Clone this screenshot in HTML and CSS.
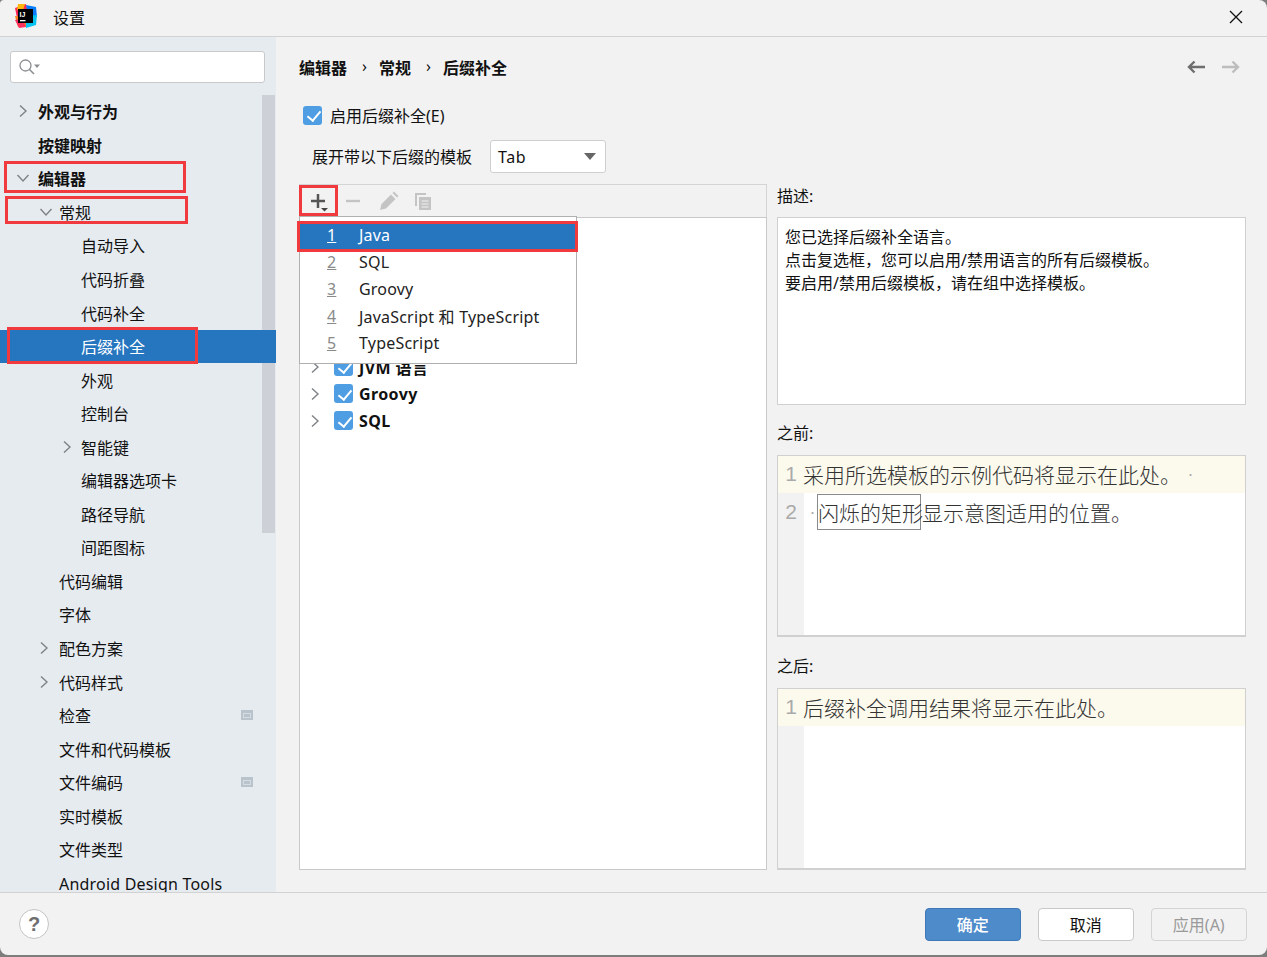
FILE: index.html
```html
<!DOCTYPE html>
<html lang="zh-CN">
<head>
<meta charset="UTF-8" />
<title>设置</title>
<link rel="stylesheet" href="styles.css">
</head>
<body>
<div class="window">

  <div class="titlebar">
    <svg class="logo" width="24" height="24" viewBox="0 0 24 24">
      <polygon points="1,4 12,0 14,8 3,14" fill="#fe2857"/>
      <polygon points="4,0 11,0 9,6 3,6" fill="#fdb60d"/>
      <polygon points="12,1 22,3 23,13 14,12" fill="#087cfa"/>
      <polygon points="1,12 10,12 14,23 4,23" fill="#fc801d"/>
      <polygon points="1,16 8,14 12,23 5,24" fill="#fe315d"/>
      <polygon points="12,12 23,11 22,21 12,24" fill="#07c3f2"/>
      <rect x="4" y="5" width="15" height="14" fill="#000"/>
      <rect x="6" y="16" width="5.500" height="1.300" fill="#fff"/>
      <text x="5.500" y="12.500" font-family="Liberation Sans" font-weight="700" font-size="7" fill="#fff">IJ</text>
    </svg>
    <span class="title">设置</span>
    <svg class="close" width="14" height="14" viewBox="0 0 14 14"><path d="M1 1L13 13M13 1L1 13" stroke="#111" stroke-width="1.300" fill="none"/></svg>
  </div>

  <div class="content">
    <aside class="sidebar">
      <div class="search">
        <svg width="24" height="18" viewBox="0 0 24 18">
          <circle cx="7.500" cy="7.500" r="5.500" fill="none" stroke="#8c8f92" stroke-width="1.300"/>
          <path d="M11.500 11.500L16 16" stroke="#8c8f92" stroke-width="1.600"/>
          <path d="M16 6.500h6l-3 3.500z" fill="#8c8f92"/>
        </svg>
      </div>
      <div class="tree">
        <div class="row lv0 strong"><svg class="chev" width="10" height="14" viewBox="0 0 10 14"><path d="M2 1.500L8 7L2 12.500" fill="none" stroke="#7f8387" stroke-width="1.400"/></svg>外观与行为</div>
        <div class="row lv0 strong">按键映射</div>
        <div class="row lv0 strong"><svg class="chev down" width="14" height="10" viewBox="0 0 14 10"><path d="M1.500 2L7 8L12.500 2" fill="none" stroke="#7f8387" stroke-width="1.400"/></svg>编辑器</div>
        <div class="row lv1"><svg class="chev" width="14" height="10" viewBox="0 0 14 10"><path d="M1.500 2L7 8L12.500 2" fill="none" stroke="#7f8387" stroke-width="1.400"/></svg>常规</div>
        <div class="row lv2">自动导入</div>
        <div class="row lv2">代码折叠</div>
        <div class="row lv2">代码补全</div>
        <div class="row lv2 selected">后缀补全</div>
        <div class="row lv2">外观</div>
        <div class="row lv2">控制台</div>
        <div class="row lv2"><svg class="chev" width="10" height="14" viewBox="0 0 10 14"><path d="M2 1.500L8 7L2 12.500" fill="none" stroke="#7f8387" stroke-width="1.400"/></svg>智能键</div>
        <div class="row lv2">编辑器选项卡</div>
        <div class="row lv2">路径导航</div>
        <div class="row lv2">间距图标</div>
        <div class="row lv1">代码编辑</div>
        <div class="row lv1">字体</div>
        <div class="row lv1"><svg class="chev" width="10" height="14" viewBox="0 0 10 14"><path d="M2 1.500L8 7L2 12.500" fill="none" stroke="#7f8387" stroke-width="1.400"/></svg>配色方案</div>
        <div class="row lv1"><svg class="chev" width="10" height="14" viewBox="0 0 10 14"><path d="M2 1.500L8 7L2 12.500" fill="none" stroke="#7f8387" stroke-width="1.400"/></svg>代码样式</div>
        <div class="row lv1">检查<span class="badge"></span></div>
        <div class="row lv1">文件和代码模板</div>
        <div class="row lv1">文件编码<span class="badge"></span></div>
        <div class="row lv1">实时模板</div>
        <div class="row lv1">文件类型</div>
        <div class="row lv1 latin">Android Design Tools</div>
      </div>
      <div class="scrollbar"></div>
    </aside>

    <main class="panel">
      <div class="crumbs">
        <span>编辑器</span><i>›</i><span>常规</span><i>›</i><span>后缀补全</span>
        <div class="nav">
          <svg width="20" height="14" viewBox="0 0 20 14"><path d="M19 7H3M8.500 1.500L3 7L8.500 12.500" fill="none" stroke="#6e6e6e" stroke-width="2.400"/></svg>
          <svg width="20" height="14" viewBox="0 0 20 14"><path d="M1 7H17M11.500 1.500L17 7L11.500 12.500" fill="none" stroke="#bdbdbd" stroke-width="2.400"/></svg>
        </div>
      </div>

      <label class="enable"><span class="check"></span>启用后缀补全(E)</label>

      <div class="expand">
        <span class="expand-label">展开带以下后缀的模板</span>
        <div class="select">Tab<b></b></div>
      </div>

      <div class="columns">
        <section class="left">
          <div class="toolbar">
            <svg class="tb-add" width="20" height="22" viewBox="0 0 20 22"><path d="M2 9h14M9 2v14" stroke="#555" stroke-width="2.500" fill="none"/><path d="M12 16h7l-3.500 3.500z" fill="#444"/></svg>
            <svg class="tb-remove" width="16" height="16" viewBox="0 0 16 16"><path d="M1 8h14" stroke="#c4c4c4" stroke-width="2.400"/></svg>
            <svg class="tb-edit" width="20" height="20" viewBox="0 0 20 20"><path d="M1 19l1.500-6L12 3.500l4.500 4.500L7 17.500zM13.500 2l1.500-1.500 4.500 4.500L18 6.500z" fill="#c4c4c4"/></svg>
            <svg class="tb-copy" width="18" height="18" viewBox="0 0 18 18"><path d="M1 1h11v2H3v11H1z" fill="#c4c4c4"/><path d="M5 5h12v13H5z" fill="#c4c4c4"/><path d="M7.500 9h7M7.500 12h7M7.500 15h7" stroke="#f2f2f2" stroke-width="1"/></svg>
          </div>
          <div class="listbox">
            <div class="item"><svg class="chev" width="10" height="14" viewBox="0 0 10 14"><path d="M2 1.500L8 7L2 12.500" fill="none" stroke="#7f8387" stroke-width="1.400"/></svg><span class="check"></span>JVM 语言</div>
            <div class="item"><svg class="chev" width="10" height="14" viewBox="0 0 10 14"><path d="M2 1.500L8 7L2 12.500" fill="none" stroke="#7f8387" stroke-width="1.400"/></svg><span class="check"></span>Groovy</div>
            <div class="item"><svg class="chev" width="10" height="14" viewBox="0 0 10 14"><path d="M2 1.500L8 7L2 12.500" fill="none" stroke="#7f8387" stroke-width="1.400"/></svg><span class="check"></span>SQL</div>
          </div>
          <div class="popup">
            <div class="pop-item active"><u>1</u>Java</div>
            <div class="pop-item"><u>2</u>SQL</div>
            <div class="pop-item"><u>3</u>Groovy</div>
            <div class="pop-item"><u>4</u>JavaScript 和 TypeScript</div>
            <div class="pop-item"><u>5</u>TypeScript</div>
          </div>
        </section>

        <section class="right">
          <div class="caption first">描述:</div>
          <div class="desc">
            <p>您已选择后缀补全语言。</p>
            <p>点击复选框，您可以启用/禁用语言的所有后缀模板。</p>
            <p>要启用/禁用后缀模板，请在组中选择模板。</p>
          </div>
          <div class="caption before">之前:</div>
          <div class="editor">
            <div class="line current"><span class="num">1</span><span class="code">采用所选模板的示例代码将显示在此处。</span><span class="ws ws-end">·</span></div>
            <div class="line second"><span class="num">2</span><span class="ws ws-start">·</span><span class="code"><span class="tpl">闪烁的矩形</span><span>显示意图适用的位置。</span></span></div>
          </div>
          <div class="caption after">之后:</div>
          <div class="editor">
            <div class="line current"><span class="num">1</span><span class="code">后缀补全调用结果将显示在此处。</span></div>
          </div>
        </section>
      </div>
    </main>
  </div>

  <div class="footer">
    <div class="help">?</div>
    <div class="buttons">
      <button class="btn primary">确定</button>
      <button class="btn">取消</button>
      <button class="btn disabled">应用(A)</button>
    </div>
  </div>

  <!-- red annotation boxes drawn over the screenshot -->
  <div class="mark m1"></div>
  <div class="mark m2"></div>
  <div class="mark m3"></div>
  <div class="mark m4"></div>
  <div class="mark m5"></div>
</div>
</body>
</html>
```

FILE: styles.css
```css
* {
  box-sizing: border-box;
}
html, body {
  margin: 0;
  height: 100%;
  overflow: hidden;
  background: #7d7d7d;
}
body {
  font-family: "Noto Sans", "Noto Sans CJK SC", sans-serif;
  font-size: 16px;
  color: #111;
}
.window {
  position: relative;
  width: 1267px;
  height: 955px;
  background: #f2f2f2;
  border-radius: 4px 8px 8px 8px;
  overflow: hidden;
  display: flex;
  flex-direction: column;
}

/* title bar */
.titlebar {
  height: 37px;
  flex: none;
  display: flex;
  align-items: center;
  padding: 0 24px 0 14px;
  border-bottom: 1px solid #d2d2d2;
}
.logo {
  margin-right: 15px;
  margin-top: -4px;
}
.title {
  margin-top: -2px;
}
.close {
  margin-left: auto;
  margin-top: -3px;
}

.content {
  flex: 1;
  min-height: 0;
  display: flex;
}

/* sidebar */
.sidebar {
  position: relative;
  width: 276px;
  flex: none;
  background: #e6ebf0;
  padding-top: 14px;
  overflow: hidden;
}
.search {
  height: 32px;
  margin: 0 11px 0 10px;
  background: #fff;
  border: 1px solid #c9c9c9;
  border-radius: 3px;
  padding: 6px 0 0 7px;
}
.search svg {
  display: block;
}
.tree {
  margin-top: 12px;
}
.row {
  height: 33.55px;
  display: flex;
  align-items: center;
  position: relative;
  white-space: nowrap;
  padding-bottom: 1px;
}
.row .chev {
  position: absolute;
}
.lv0 { padding-left: 38px; }
.lv1 { padding-left: 59px; }
.lv2 { padding-left: 81px; }
.lv0 .chev { left: 18px; }
.lv0 .chev.down { left: 16px; }
.lv1 .chev { left: 39px; }
.lv2 .chev { left: 62px; }
.strong {
  font-weight: 700;
}
.latin {
  letter-spacing: 0.2px;
  padding-top: 3px;
}
.selected {
  background: #2675bf;
  color: #fff;
  z-index: 1;
}
.badge {
  width: 12px;
  height: 10px;
  margin-left: auto;
  margin-right: 23px;
  background: #b9c3cc;
  border: 2px solid #b9c3cc;
  border-top-width: 3px;
  box-shadow: inset 0 0 0 1px #d5dce2;
}
.scrollbar {
  position: absolute;
  left: 262px;
  top: 58px;
  width: 13px;
  height: 438px;
  background: #cdd0d6;
}

/* right panel */
.panel {
  flex: 1;
  min-width: 0;
  padding: 0 21px 22px 23px;
  display: flex;
  flex-direction: column;
}
.crumbs {
  height: 62px;
  flex: none;
  display: flex;
  align-items: center;
  font-weight: 700;
  padding-bottom: 2px;
}
.crumbs i {
  font-style: normal;
  font-weight: 400;
  width: 32px;
  padding-left: 3px;
  text-align: center;
  margin-top: -3px;
}
.nav {
  margin-left: auto;
  margin-right: 5px;
  display: flex;
  gap: 15px;
}
.check {
  display: inline-block;
  width: 19px;
  height: 19px;
  flex: none;
  border-radius: 3px;
  background: #4f9ee3;
  position: relative;
}
.check::after {
  content: "";
  position: absolute;
  left: 6.5px;
  top: 2.5px;
  width: 6px;
  height: 11px;
  border: solid #fff;
  border-width: 0 2px 2px 0;
  transform: rotate(40deg);
}
.enable {
  height: 34px;
  flex: none;
  display: flex;
  align-items: center;
  gap: 8px;
  padding-left: 4px;
  margin-top: -1px;
}
.expand {
  height: 41px;
  flex: none;
  display: flex;
  align-items: center;
  padding-left: 13px;
  margin-top: 4px;
}
.expand-label {
  margin-top: -2px;
}
.select {
  width: 116px;
  height: 33px;
  margin-left: 18px;
  background: #fff;
  border: 1px solid #cfcfcf;
  border-radius: 3px;
  padding-left: 7px;
  line-height: 32px;
  letter-spacing: 0.6px;
  position: relative;
}
.select b {
  position: absolute;
  right: 9px;
  top: 12px;
  border: 6px solid transparent;
  border-top: 7px solid #666;
  border-bottom: 0;
}
.columns {
  flex: 1;
  min-height: 0;
  display: grid;
  grid-template-columns: 468px 469px;
  gap: 10px;
  margin-top: 7px;
}
.left {
  position: relative;
  display: flex;
  flex-direction: column;
}
.toolbar {
  height: 33px;
  flex: none;
  display: flex;
  align-items: center;
  padding-left: 9px;
  border: 1px solid #d4d4d4;
  border-bottom: 0;
  background: #f2f2f2;
}
.tb-add { margin-top: 3px; }
.tb-remove { margin-left: 16px; }
.tb-edit { margin-left: 18px; }
.tb-copy { margin-left: 15px; }
.listbox {
  flex: 1;
  background: #fff;
  border: 1px solid #c9c9c9;
  padding: 135px 0 0 0;
}
.item {
  height: 27px;
  display: flex;
  align-items: center;
  padding-left: 34px;
  position: relative;
  font-weight: 700;
  letter-spacing: 0.4px;
  gap: 6px;
}
.item .chev {
  position: absolute;
  left: 10px;
}
.popup {
  position: absolute;
  left: 0;
  top: 32px;
  width: 278px;
  height: 148px;
  background: #fff;
  border: 1px solid #b0b0b0;
  padding-top: 6px;
  z-index: 2;
}
.pop-item {
  height: 26.8px;
  display: flex;
  align-items: center;
  padding: 0 0 2px 27px;
  white-space: nowrap;
  color: #222;
  letter-spacing: 0.2px;
}
.pop-item u {
  width: 32px;
  flex: none;
  color: #8a8a8a;
}
.pop-item.active {
  background: #2675bf;
  color: #fff;
}
.pop-item.active u {
  color: #fff;
}
.right {
  display: flex;
  flex-direction: column;
}
.caption {
  height: 51px;
  flex: none;
  display: flex;
  align-items: center;
  padding-top: 3px;
}
.caption.before {
  height: 50px;
}
.caption.after {
  padding-top: 4px;
}
.caption.first {
  height: 33px;
  padding: 0 0 12px;
}
.desc {
  height: 188px;
  flex: none;
  background: #fff;
  border: 1px solid #d0d0d0;
  padding: 8px 7px;
  line-height: 23.2px;
}
.desc p {
  margin: 0;
}
.editor {
  height: 182px;
  flex: none;
  background: #fff;
  border: 1px solid #d0d0d0;
  border-bottom-width: 2px;
  position: relative;
  font-family: "Noto Sans CJK SC", sans-serif;
  font-size: 21px;
  font-weight: 300;
  color: #333;
}
.editor::before {
  content: "";
  position: absolute;
  left: 0;
  top: 0;
  bottom: 0;
  width: 26px;
  background: #f2f2f2;
}
.line {
  height: 37px;
  display: flex;
  align-items: center;
  position: relative;
  padding-bottom: 2px;
}
.line.current {
  background: #fcfaed;
}
.line.second {
  padding-bottom: 0;
}
.num {
  width: 26px;
  flex: none;
  text-align: center;
  color: #aaa;
  font-family: "Liberation Sans", sans-serif;
  font-size: 21px;
}
.code {
  white-space: nowrap;
  margin-left: -1px;
}
.second .code {
  margin-left: 0;
  display: flex;
  align-items: center;
}
.ws {
  font-size: 11px;
  color: #aaa;
}
.ws-end {
  margin-left: 4px;
}
.ws-start {
  width: 13px;
  padding-left: 3px;
}
.tpl {
  border: 1px solid #8a8a8a;
  width: 104px;
  height: 36px;
  line-height: 34px;
  margin-right: 1px;
  white-space: nowrap;
}

/* footer */
.footer {
  height: 63px;
  flex: none;
  display: flex;
  align-items: center;
  justify-content: space-between;
  padding: 0 20px 0 19px;
  border-top: 1px solid #d2d2d2;
}
.help {
  width: 30px;
  height: 30px;
  border-radius: 50%;
  background: #fff;
  border: 1px solid #c4c4c4;
  color: #6e6e6e;
  font-family: "Liberation Sans", sans-serif;
  font-weight: 700;
  font-size: 20px;
  text-align: center;
  line-height: 28px;
}
.buttons {
  display: flex;
  gap: 16.5px;
}
.btn {
  width: 96.5px;
  height: 33px;
  padding: 0;
  font: inherit;
  background: #fff;
  border: 1px solid #c9c9c9;
  border-radius: 4px;
  color: #111;
}
.btn.primary {
  background: #4e8bca;
  border-color: #3f78b6;
  color: #fff;
  font-weight: 500;
}
.btn.disabled {
  background: #f2f2f2;
  border-color: #d4d4d4;
  color: #9a9a9a;
}

/* annotations */
.mark {
  position: absolute;
  border: 3px solid #f03a3e;
  z-index: 5;
}
.m1 { left: 4px; top: 161px; width: 182px; height: 32px; }
.m2 { left: 5px; top: 196px; width: 183px; height: 28px; }
.m3 { left: 7px; top: 327px; width: 191px; height: 37px; }
.m4 { left: 299px; top: 185px; width: 39px; height: 31px; }
.m5 { left: 297px; top: 221px; width: 281px; height: 31px; }
```
